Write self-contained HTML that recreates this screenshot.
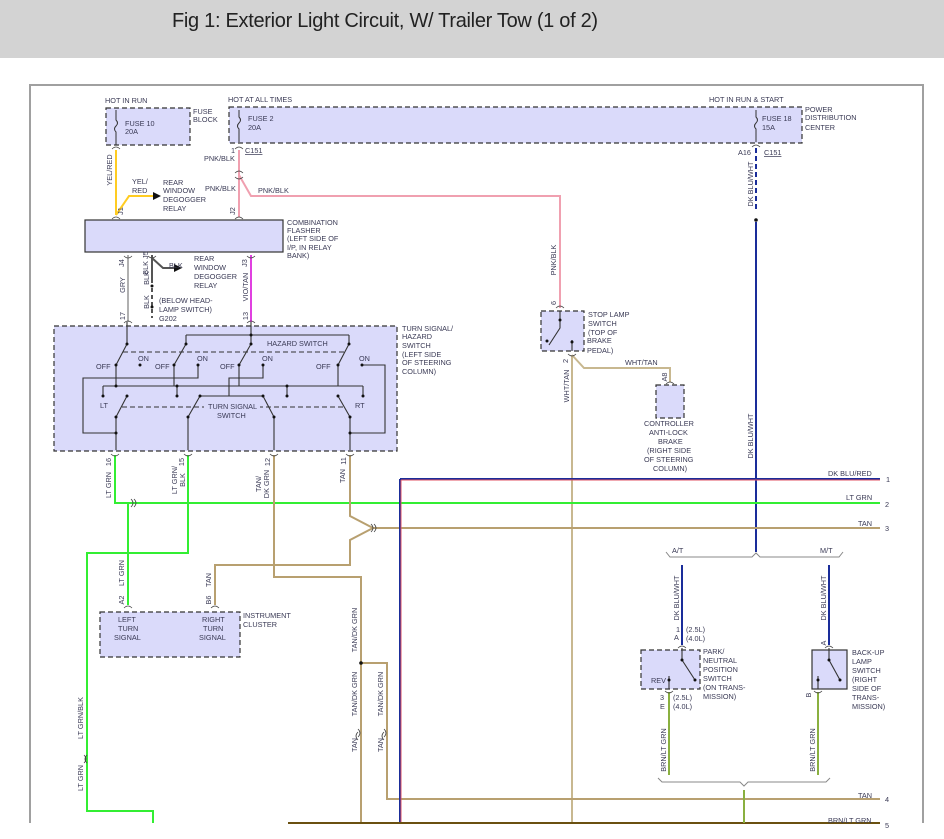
<!DOCTYPE html>
<html><head><meta charset="utf-8"><style>
html,body{margin:0;padding:0;background:#fff;}
body{width:944px;height:839px;overflow:hidden;position:relative;}
.hdr{position:absolute;left:0;top:0;width:944px;height:58px;background:#d3d3d3;}
.hdr span{position:absolute;left:172px;top:10px;font:20px "Liberation Sans",sans-serif;color:#222;letter-spacing:-0.3px;}
svg{position:absolute;left:0;top:0;}
text{font-family:"Liberation Sans",sans-serif;font-size:7.3px;fill:#3a3a55;}
</style></head><body>
<div class="hdr"><span>Fig 1: Exterior Light Circuit, W/ Trailer Tow (1 of 2)</span></div>
<svg width="944" height="839" viewBox="0 0 944 839">
<path d="M30 823 V85 H923 V823" fill="none" stroke="#a0a0a0" stroke-width="2"/>

<g fill="#dadafa" stroke="#333" stroke-width="1.2">
<rect x="106" y="108" width="84" height="37" stroke-dasharray="5 3"/>
<rect x="229" y="107" width="573" height="36" stroke-dasharray="5 3"/>
<rect x="85" y="220" width="198" height="32"/>
<rect x="54" y="326" width="343" height="125" stroke-dasharray="5 3"/>
<rect x="541" y="311" width="43" height="40" stroke-dasharray="5 3"/>
<rect x="656" y="385" width="28" height="33" stroke-dasharray="5 3"/>
<rect x="100" y="612" width="140" height="45" stroke-dasharray="5 3"/>
<rect x="641" y="650" width="59" height="39" stroke-dasharray="5 3"/>
<rect x="812" y="650" width="35" height="39"/>
</g>

<g fill="none" stroke="#333" stroke-width="1">
<path d="M116 110 V120 q3 3 0 6 q-3 3 0 6 V145"/>
<path d="M239 110 V117 q3 3 0 6 q-3 3 0 6 V142"/>
<path d="M756 110 V117 q3 3 0 6 q-3 3 0 6 V142"/>
</g>

<g fill="none" stroke-width="2">
<path d="M116 150 V215 M116 215 L129 196 H154" stroke="#ffcc22"/>
<path d="M239 150 V217 M239 175 L251 196 H560 V308" stroke="#f0a0b0"/>
<path d="M128 255 V322" stroke="#b0b0b0"/>
<path d="M152 255 V283" stroke="#555"/>
<path d="M152 288 V318" stroke="#555" stroke-dasharray="4 3"/>
<path d="M152 258 L163 268 H174" stroke="#555"/>
<path d="M251 255 V322" stroke="#e040e0"/>
<path d="M756 148 V212" stroke="#1a2d9a" stroke-dasharray="5 3"/>
<path d="M756 222 V552" stroke="#1a2d9a"/>
<path d="M572 355 V823 M572 355 L584 368 H670 V382" stroke="#c8b890"/>
<path d="M115 455 V503 H880" stroke="#33ee33"/>
<path d="M128 503 V605" stroke="#33ee33"/>
<path d="M188 455 V553 H87 V811 H153 V823" stroke="#33ee33"/>
<path d="M274 455 V577 H361 V823 M361 663 H387 V799 H880" stroke="#b8a070"/>
<path d="M350 455 V516 L373 528 H880 M373 528 L350 540 V565 H215 V605" stroke="#b8a070"/>
<path d="M400 479 V823 M400 479 H880" stroke="#1a2d9a"/>
<path d="M401 480 V823 M401 480 H880" stroke="#e05060" stroke-width="1"/>
<path d="M288 823 H880" stroke="#6a5010"/>
<path d="M682 565 V645 M829 565 V645" stroke="#1a2d9a"/>
<path d="M669 692 V775 M818 692 V775 M744 790 V823" stroke="#8ab040"/>
</g>
<g fill="none" stroke="#888" stroke-width="1">
<path d="M666 552 L670 557 H752 L756 553 L760 557 H839 L843 552"/>
<path d="M658 778 L662 782 H740 L744 786 L748 782 H826 L830 778"/>
</g>
<g fill="#111"><path d="M153 192 L161 196 L153 200Z M174 264 L182 268 L174 272Z"/><circle cx="756" cy="220" r="1.8"/><circle cx="361" cy="663" r="1.8"/><circle cx="152" cy="286" r="1.5"/><circle cx="152" cy="307" r="1.5"/></g>

<g fill="none" stroke="#444" stroke-width="0.8">
<path d="M112 149 q4 -4 8 0 M112 219 q4 -4 8 0 M235 149 q4 -4 8 0 M235 173 q4 -4 8 0 M235 177 q4 4 8 0 M235 219 q4 -4 8 0 M752 147 q4 -4 8 0"/>
<path d="M124 256 q4 4 8 0 M148 256 q4 4 8 0 M247 256 q4 4 8 0 M124 323 q4 -4 8 0 M247 323 q4 -4 8 0"/>
<path d="M111 454 q4 4 8 0 M184 454 q4 4 8 0 M270 454 q4 4 8 0 M346 454 q4 4 8 0"/>
<path d="M124 608 q4 -4 8 0 M211 608 q4 -4 8 0 M556 308 q4 -4 8 0 M568 354 q4 4 8 0 M666 384 q4 -4 8 0"/>
<path d="M678 648 q4 -4 8 0 M665 691 q4 4 8 0 M825 648 q4 -4 8 0 M814 691 q4 4 8 0"/>
<path d="M131 499 q4 4 0 8 M134 499 q4 4 0 8 M371 524 q4 4 0 8 M374 524 q4 4 0 8"/>
<path d="M84 755 q4 4 0 8 M87 755 q-4 4 0 8 M358 729 q4 4 0 8 M358 732 q-4 4 0 8 M384 729 q4 4 0 8 M384 732 q-4 4 0 8"/>
</g>

<g fill="none" stroke="#333" stroke-width="1.1">
<path d="M127 322 V344 L116 365 M186 335 V344 L174 365 M251 322 V344 L239 365 M349 335 V344 L338 365 M186 335 H349"/>
<path d="M116 365 V386 M174 365 V386 M239 365 V386 M338 365 V386 M103 386 H363 M103 386 V396 M177 386 V396 M287 386 V396 M363 386 V396"/>
<path d="M198 365 V378 H83 V433 H116 M263 365 V378 H229 V396 M362 365 H385 V433 H350"/>
<path d="M127 396 L116 417 M200 396 L188 417 M200 396 H263 L274 417 M338 396 L350 417"/>
<path d="M116 417 V450 M188 417 V450 M274 417 V450 M350 417 V450"/>
<path d="M123 352 H347 M122 407 H345" stroke-dasharray="5 3"/>
<path d="M549 345 L560 328 V311 M572 351 V340"/>
<path d="M682 648 V660 L695 680 M669 689 V676 M829 648 V660 L840 680 M818 689 V676"/>
</g>
<rect x="262" y="339" width="68" height="9" fill="#dadafa"/>
<rect x="204" y="401" width="56" height="19" fill="#dadafa"/>
<g fill="#111">
<circle cx="127" cy="344" r="1.5"/><circle cx="186" cy="344" r="1.5"/><circle cx="251" cy="344" r="1.5"/><circle cx="349" cy="344" r="1.5"/>
<circle cx="116" cy="365" r="1.5"/><circle cx="140" cy="365" r="1.5"/><circle cx="174" cy="365" r="1.5"/><circle cx="198" cy="365" r="1.5"/><circle cx="239" cy="365" r="1.5"/><circle cx="263" cy="365" r="1.5"/><circle cx="338" cy="365" r="1.5"/><circle cx="362" cy="365" r="1.5"/>
<circle cx="116" cy="386" r="1.5"/><circle cx="177" cy="386" r="1.5"/><circle cx="287" cy="386" r="1.5"/><circle cx="251" cy="335" r="1.5"/>
<circle cx="103" cy="396" r="1.5"/><circle cx="177" cy="396" r="1.5"/><circle cx="287" cy="396" r="1.5"/><circle cx="363" cy="396" r="1.5"/>
<circle cx="127" cy="396" r="1.5"/><circle cx="200" cy="396" r="1.5"/><circle cx="263" cy="396" r="1.5"/><circle cx="338" cy="396" r="1.5"/>
<circle cx="116" cy="417" r="1.5"/><circle cx="188" cy="417" r="1.5"/><circle cx="274" cy="417" r="1.5"/><circle cx="350" cy="417" r="1.5"/><circle cx="116" cy="433" r="1.5"/><circle cx="350" cy="433" r="1.5"/>
<circle cx="560" cy="320" r="1.5"/><circle cx="547" cy="341" r="1.5"/><circle cx="572" cy="342" r="1.5"/>
<circle cx="682" cy="660" r="1.5"/><circle cx="695" cy="680" r="1.5"/><circle cx="669" cy="680" r="1.5"/><circle cx="829" cy="660" r="1.5"/><circle cx="840" cy="680" r="1.5"/><circle cx="818" cy="680" r="1.5"/>
</g>

<text x="105" y="103">HOT IN RUN</text>
<text x="193" y="114">FUSE</text><text x="193" y="122">BLOCK</text>
<text x="125" y="126">FUSE 10</text><text x="125" y="134">20A</text>
<text x="228" y="102">HOT AT ALL TIMES</text>
<text x="248" y="121">FUSE 2</text><text x="248" y="130">20A</text>
<text x="709" y="102">HOT IN RUN &amp; START</text>
<text x="762" y="121">FUSE 18</text><text x="762" y="130">15A</text>
<text x="805" y="112">POWER</text><text x="805" y="120">DISTRIBUTION</text><text x="805" y="130">CENTER</text>
<text x="231" y="153">1</text><text x="245" y="153" text-decoration="underline">C151</text>
<text x="738" y="155">A16</text><text x="764" y="155" text-decoration="underline">C151</text>
<text x="204" y="161">PNK/BLK</text><text x="205" y="191">PNK/BLK</text><text x="258" y="193">PNK/BLK</text>
<text x="132" y="184">YEL/</text><text x="132" y="193">RED</text>
<text x="163" y="185">REAR</text><text x="163" y="193">WINDOW</text><text x="163" y="202">DEGOGGER</text><text x="163" y="211">RELAY</text>
<text x="287" y="225">COMBINATION</text><text x="287" y="233">FLASHER</text><text x="287" y="241">(LEFT SIDE OF</text><text x="287" y="250">I/P, IN RELAY</text><text x="287" y="258">BANK)</text>
<text x="169" y="268">BLK</text>
<text x="194" y="261">REAR</text><text x="194" y="270">WINDOW</text><text x="194" y="279">DEGOGGER</text><text x="194" y="288">RELAY</text>
<text x="159" y="303">(BELOW HEAD-</text><text x="159" y="312">LAMP SWITCH)</text><text x="159" y="321">G202</text>
<text x="402" y="331">TURN SIGNAL/</text><text x="402" y="339">HAZARD</text><text x="402" y="348">SWITCH</text><text x="402" y="357">(LEFT SIDE</text><text x="402" y="365">OF STEERING</text><text x="402" y="374">COLUMN)</text>
<text x="267" y="346">HAZARD SWITCH</text>
<text x="96" y="369">OFF</text><text x="138" y="361">ON</text><text x="155" y="369">OFF</text><text x="197" y="361">ON</text><text x="220" y="369">OFF</text><text x="262" y="361">ON</text><text x="316" y="369">OFF</text><text x="359" y="361">ON</text>
<text x="100" y="408">LT</text><text x="355" y="408">RT</text>
<text x="208" y="409">TURN SIGNAL</text><text x="217" y="418">SWITCH</text>
<text x="588" y="317">STOP LAMP</text><text x="588" y="326">SWITCH</text><text x="588" y="335">(TOP OF</text><text x="587" y="343">BRAKE</text><text x="587" y="353">PEDAL)</text>
<text x="625" y="365">WHT/TAN</text>
<text x="644" y="426">CONTROLLER</text><text x="649" y="435">ANTI-LOCK</text><text x="658" y="444">BRAKE</text><text x="647" y="453">(RIGHT SIDE</text><text x="644" y="462">OF STEERING</text><text x="653" y="471">COLUMN)</text>
<text x="828" y="476">DK BLU/RED</text><text x="846" y="500">LT GRN</text><text x="858" y="526">TAN</text><text x="858" y="798">TAN</text><text x="828" y="823">BRN/LT GRN</text>
<text x="886" y="482">1</text><text x="885" y="507">2</text><text x="885" y="531">3</text><text x="885" y="802">4</text><text x="885" y="828">5</text>
<text x="672" y="553">A/T</text><text x="820" y="553">M/T</text>
<text x="676" y="632">1</text><text x="674" y="640">A</text><text x="686" y="632">(2.5L)</text><text x="686" y="641">(4.0L)</text>
<text x="660" y="700">3</text><text x="660" y="709">E</text><text x="673" y="700">(2.5L)</text><text x="673" y="709">(4.0L)</text>
<text x="651" y="683">REV</text>
<text x="703" y="654">PARK/</text><text x="703" y="663">NEUTRAL</text><text x="703" y="672">POSITION</text><text x="703" y="681">SWITCH</text><text x="703" y="690">(ON TRANS-</text><text x="703" y="699">MISSION)</text>
<text x="852" y="655">BACK-UP</text><text x="852" y="664">LAMP</text><text x="852" y="673">SWITCH</text><text x="852" y="682">(RIGHT</text><text x="852" y="691">SIDE OF</text><text x="852" y="700">TRANS-</text><text x="852" y="709">MISSION)</text>
<text x="243" y="618">INSTRUMENT</text><text x="243" y="627">CLUSTER</text>
<text x="118" y="622">LEFT</text><text x="118" y="631">TURN</text><text x="114" y="640">SIGNAL</text>
<text x="202" y="622">RIGHT</text><text x="203" y="631">TURN</text><text x="199" y="640">SIGNAL</text>

<g text-anchor="middle">
<text transform="translate(112,170) rotate(-90)">YEL/RED</text>
<text transform="translate(123,211) rotate(-90)">J1</text>
<text transform="translate(235,211) rotate(-90)">J2</text>
<text transform="translate(124,263) rotate(-90)">J4</text>
<text transform="translate(148,263) rotate(-90)">BLK J5</text>
<text transform="translate(247,263) rotate(-90)">J3</text>
<text transform="translate(125,285) rotate(-90)">GRY</text>
<text transform="translate(149,278) rotate(-90)">BLK</text>
<text transform="translate(149,302) rotate(-90)">BLK</text>
<text transform="translate(248,287) rotate(-90)">VIO/TAN</text>
<text transform="translate(125,316) rotate(-90)">17</text>
<text transform="translate(248,316) rotate(-90)">13</text>
<text transform="translate(556,260) rotate(-90)">PNK/BLK</text>
<text transform="translate(556,303) rotate(-90)">6</text>
<text transform="translate(568,361) rotate(-90)">2</text>
<text transform="translate(569,386) rotate(-90)">WHT/TAN</text>
<text transform="translate(667,377) rotate(-90)">A8</text>
<text transform="translate(753,184) rotate(-90)">DK BLU/WHT</text>
<text transform="translate(753,436) rotate(-90)">DK BLU/WHT</text>
<text transform="translate(111,462) rotate(-90)">16</text>
<text transform="translate(111,485) rotate(-90)">LT GRN</text>
<text transform="translate(184,462) rotate(-90)">15</text>
<text transform="translate(177,480) rotate(-90)">LT GRN/</text>
<text transform="translate(185,480) rotate(-90)">BLK</text>
<text transform="translate(270,462) rotate(-90)">12</text>
<text transform="translate(261,484) rotate(-90)">TAN/</text>
<text transform="translate(269,484) rotate(-90)">DK GRN</text>
<text transform="translate(346,461) rotate(-90)">11</text>
<text transform="translate(345,476) rotate(-90)">TAN</text>
<text transform="translate(124,573) rotate(-90)">LT GRN</text>
<text transform="translate(124,600) rotate(-90)">A2</text>
<text transform="translate(211,580) rotate(-90)">TAN</text>
<text transform="translate(211,600) rotate(-90)">B6</text>
<text transform="translate(357,630) rotate(-90)">TAN/DK GRN</text>
<text transform="translate(357,694) rotate(-90)">TAN/DK GRN</text>
<text transform="translate(383,694) rotate(-90)">TAN/DK GRN</text>
<text transform="translate(357,745) rotate(-90)">TAN</text>
<text transform="translate(383,745) rotate(-90)">TAN</text>
<text transform="translate(83,718) rotate(-90)">LT GRN/BLK</text>
<text transform="translate(83,778) rotate(-90)">LT GRN</text>
<text transform="translate(679,598) rotate(-90)">DK BLU/WHT</text>
<text transform="translate(826,598) rotate(-90)">DK BLU/WHT</text>
<text transform="translate(826,643) rotate(-90)">A</text>
<text transform="translate(666,750) rotate(-90)">BRN/LT GRN</text>
<text transform="translate(815,750) rotate(-90)">BRN/LT GRN</text>
<text transform="translate(811,695) rotate(-90)">B</text>
</g>
</svg>
</body></html>
